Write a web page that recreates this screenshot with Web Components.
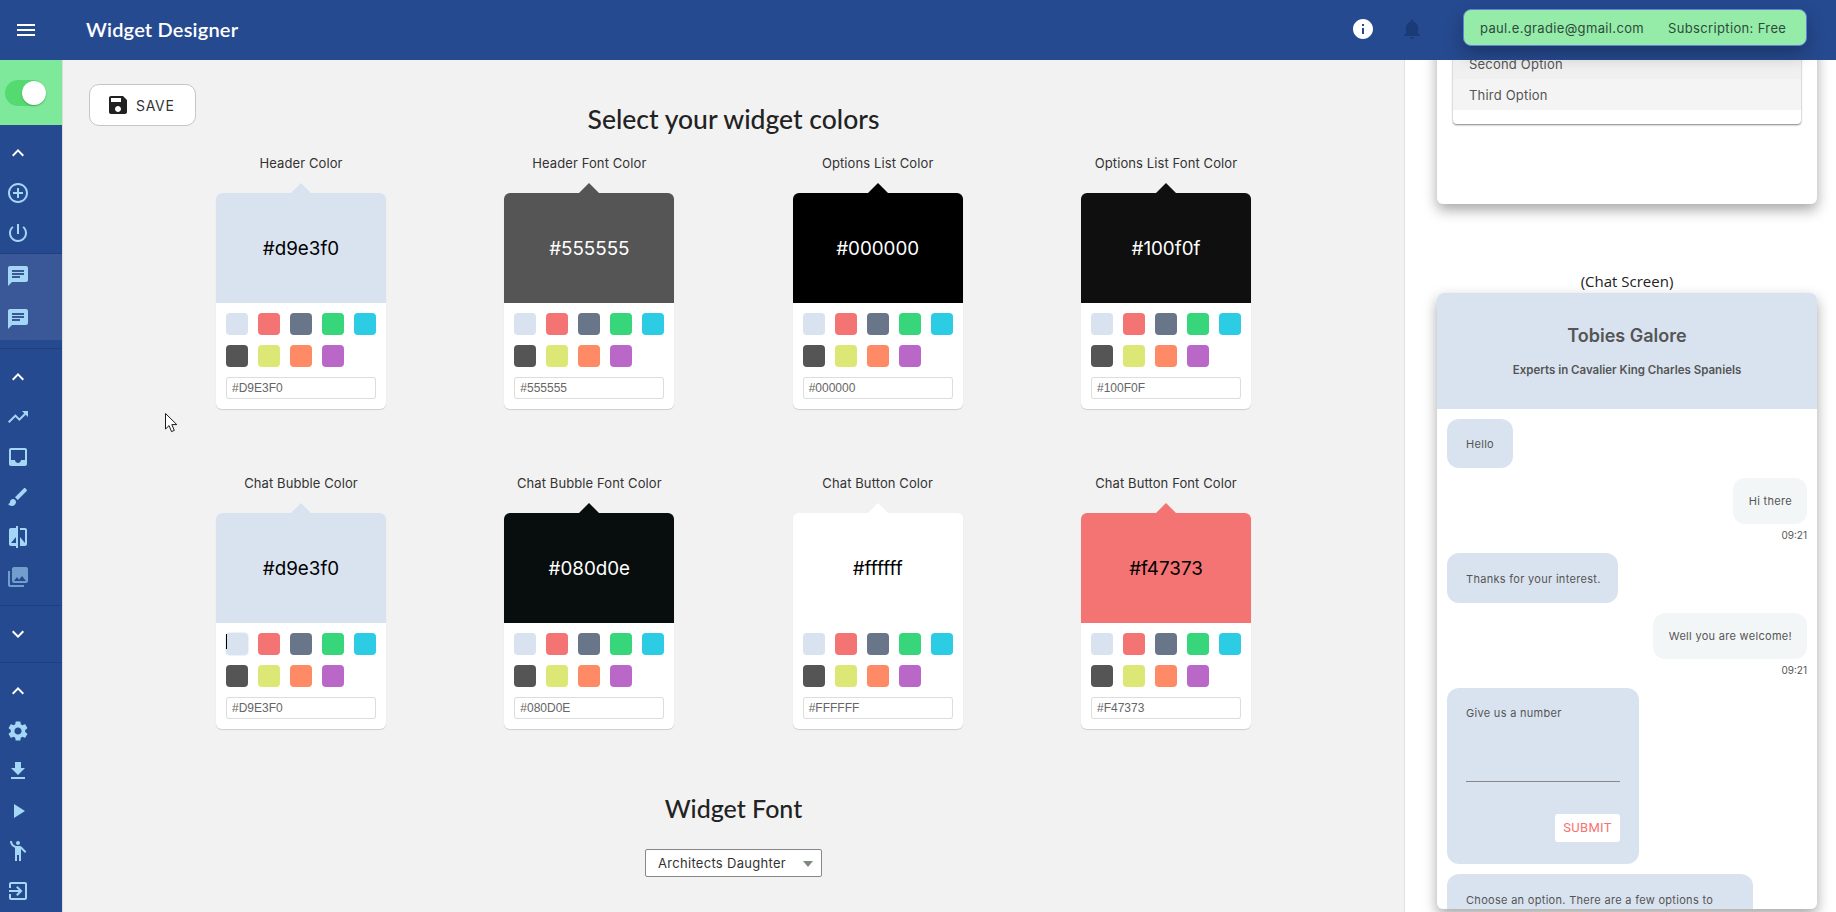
<!DOCTYPE html>
<html>
<head>
<meta charset="utf-8">
<title>Widget Designer</title>
<style>
  html, body { margin: 0; height: 100%; overflow: hidden; }
  body { font-family: Inter, "Liberation Sans", sans-serif; color: #333; }
</style>
</head>
<body>
<app-shell>
  <app-header slot="header"></app-header>
  <side-bar slot="side"></side-bar>
  <designer-main slot="main"></designer-main>
  <preview-panel slot="preview"></preview-panel>
</app-shell>
<screen-cursor></screen-cursor>

<script>
const ICONS = {
  menu: 'M3 18h18v-2H3v2zm0-5h18v-2H3v2zm0-7v2h18V6H3z',
  up: 'M12 8l-6 6 1.41 1.41L12 10.83l4.59 4.58L18 14z',
  down: 'M16.59 8.59L12 13.17 7.41 8.59 6 10l6 6 6-6z',
  add: 'M13 7h-2v4H7v2h4v4h2v-4h4v-2h-4V7zm-1-5C6.48 2 2 6.48 2 12s4.48 10 10 10 10-4.48 10-10S17.52 2 12 2zm0 18c-4.41 0-8-3.59-8-8s3.59-8 8-8 8 3.59 8 8-3.59 8-8 8z',
  power: 'M13 3h-2v10h2V3zm4.83 2.17l-1.42 1.42C17.99 7.86 19 9.81 19 12c0 3.87-3.13 7-7 7s-7-3.13-7-7c0-2.19 1.01-4.14 2.58-5.42L6.17 5.17C4.23 6.82 3 9.26 3 12c0 4.97 4.03 9 9 9s9-4.03 9-9c0-2.74-1.23-5.18-3.17-6.83z',
  chat: 'M20 2H4c-1.1 0-1.99.9-1.99 2L2 22l4-4h14c1.1 0 2-.9 2-2V4c0-1.1-.9-2-2-2zM6 9h12v2H6V9zm8 5H6v-2h8v2zm4-6H6V6h12v2z',
  trend: 'M16 6l2.29 2.29-4.88 4.88-4-4L2 16.59 3.41 18l6-6 4 4 6.3-6.29L22 12V6z',
  inbox: 'M19 3H4.99c-1.11 0-1.98.89-1.98 2L3 19c0 1.1.88 2 1.99 2H19c1.1 0 2-.9 2-2V5c0-1.11-.9-2-2-2zm0 12h-4c0 1.66-1.35 3-3 3s-3-1.34-3-3H4.99V5H19v10z',
  brush: 'M7 14c-1.66 0-3 1.34-3 3 0 1.31-1.16 2-2 2 .92 1.22 2.49 2 4 2 2.21 0 4-1.79 4-4 0-1.66-1.34-3-3-3zm13.71-9.37l-1.34-1.34c-.39-.39-1.02-.39-1.41 0L9 12.25 11.75 15l8.96-8.96c.39-.39.39-1.02 0-1.41z',
  compare: 'M10 3H5c-1.1 0-2 .9-2 2v14c0 1.1.9 2 2 2h5v2h2V1h-2v2zm0 15H5l5-6v6zm9-15h-5v2h5v13l-5-6v9h5c1.1 0 2-.9 2-2V5c0-1.1-.9-2-2-2z',
  photos: 'M22 16V4c0-1.1-.9-2-2-2H8c-1.1 0-2 .9-2 2v12c0 1.1.9 2 2 2h12c1.1 0 2-.9 2-2zm-11-4l2.03 2.71L16 11l4 5H8l3-4zM2 6v14c0 1.1.9 2 2 2h14v-2H4V6H2z',
  settings: 'M19.14 12.94c.04-.3.06-.61.06-.94 0-.32-.02-.64-.07-.94l2.03-1.58c.18-.14.23-.41.12-.61l-1.92-3.32c-.12-.22-.37-.29-.59-.22l-2.39.96c-.5-.38-1.03-.7-1.62-.94l-.36-2.54c-.04-.24-.24-.41-.48-.41h-3.84c-.24 0-.43.17-.47.41l-.36 2.54c-.59.24-1.13.57-1.62.94l-2.39-.96c-.22-.08-.47 0-.59.22L2.74 8.87c-.12.21-.08.47.12.61l2.03 1.58c-.05.3-.09.63-.09.94s.02.64.07.94l-2.03 1.58c-.18.14-.23.41-.12.61l1.92 3.32c.12.22.37.29.59.22l2.39-.96c.5.38 1.03.7 1.62.94l.36 2.54c.05.24.24.41.48.41h3.84c.24 0 .44-.17.47-.41l.36-2.54c.59-.24 1.13-.56 1.62-.94l2.39.96c.22.08.47 0 .59-.22l1.92-3.32c.12-.22.07-.47-.12-.61l-2.01-1.58zM12 15.6c-1.98 0-3.6-1.62-3.6-3.6s1.62-3.6 3.6-3.6 3.6 1.62 3.6 3.6-1.62 3.6-3.6 3.6z',
  download: 'M19 9h-4V3H9v6H5l7 7 7-7zM5 18v2h14v-2H5z',
  play: 'M8 5v14l11-7z',
  person: 'M10 4a2 2 0 1 0 4 0a2 2 0 1 0-4 0zM15.89 8.11C15.5 7.72 14.83 7 13.53 7h-2.54C8.24 6.99 6 4.75 6 2H4c0 3.16 2.11 5.84 5 6.71V22h2v-6h2v6h2V10.05L18.95 14l1.41-1.41-4.47-4.48z',
  exit: 'M10.09 15.59L11.5 17l5-5-5-5-1.41 1.41L12.67 11H3v2h9.67l-2.58 2.59zM19 3H5c-1.11 0-2 .9-2 2v4h2V5h14v14H5v-4H3v4c0 1.1.89 2 2 2h14c1.1 0 2-.9 2-2V5c0-1.1-.9-2-2-2z',
  info: 'M12 2C6.48 2 2 6.48 2 12s4.48 10 10 10 10-4.48 10-10S17.52 2 12 2zm1 15h-2v-6h2v6zm0-8h-2V7h2v2z',
  bell: 'M12 22c1.1 0 2-.9 2-2h-4c0 1.1.89 2 2 2zm6-6v-5c0-3.07-1.64-5.64-4.5-6.32V4c0-.83-.67-1.5-1.5-1.5s-1.5.67-1.5 1.5v.68C7.63 5.36 6 7.92 6 11v5l-2 2v1h16v-1l-2-2z',
  save: 'M17 3H5c-1.11 0-2 .9-2 2v14c0 1.1.89 2 2 2h14c1.1 0 2-.9 2-2V7l-4-4zm-5 16c-1.66 0-3-1.34-3-3s1.34-3 3-3 3 1.34 3 3-1.34 3-3 3zm3-10H5V5h10v4z'
};

class MdIcon extends HTMLElement {
  connectedCallback() {
    const name = this.getAttribute('name');
    this.attachShadow({ mode: 'open' }).innerHTML = `
      <style>
        :host { display: block; width: 24px; height: 24px; color: inherit; }
        svg { display: block; width: 24px; height: 24px; fill: currentColor; }
      </style>
      <svg viewBox="0 0 24 24"><path d="${ICONS[name]}"/></svg>`;
  }
}
customElements.define('md-icon', MdIcon);

class AppShell extends HTMLElement {
  constructor() {
    super();
    this.attachShadow({ mode: 'open' }).innerHTML = `
      <style>
        :host { display: flex; flex-direction: column; height: 912px; overflow: hidden; }
        .body { flex: 1; display: flex; min-height: 0; }
        ::slotted([slot=header]) { position: relative; z-index: 2; }
      </style>
      <slot name="header"></slot>
      <div class="body">
        <slot name="side"></slot>
        <slot name="main"></slot>
        <slot name="preview"></slot>
      </div>`;
  }
}
customElements.define('app-shell', AppShell);

class AppHeader extends HTMLElement {
  constructor() {
    super();
    this.attachShadow({ mode: 'open' }).innerHTML = `
      <style>
        :host { display: flex; align-items: center; height: 60px; background: #264a90; color: #fff; flex: none; }
        .menu { margin-left: 14px; }
        h1 { margin: -2px 0 0 48px; font: 600 20px Lato, "Open Sans", sans-serif; letter-spacing: .2px; flex: 1; }
        .info { margin-right: 25px; margin-top: -2px; }
        .bell { color: #1a3a78; margin-right: 39px; margin-top: -2px; }
        .pill {
          display: flex; gap: 24px; align-items: center; box-sizing: border-box;
          width: 344px; height: 37px; margin: -5px 29px 0 0; padding: 0 16px;
          background: #94eca8; border: 1px solid #5f80dc; border-radius: 8px;
          color: #2f4a3c; font: 13px Inter, sans-serif; letter-spacing: .35px; white-space: nowrap;
          box-shadow: 0 8px 18px rgba(0,0,0,.28);
        }
      </style>
      <md-icon class="menu" name="menu"></md-icon>
      <h1>Widget Designer</h1>
      <md-icon class="info" name="info"></md-icon>
      <md-icon class="bell" name="bell"></md-icon>
      <div class="pill"><span>paul.e.gradie@gmail.com</span><span>Subscription: Free</span></div>`;
  }
}
customElements.define('app-header', AppHeader);

class NavIcon extends HTMLElement {
  constructor() {
    super();
    const chevron = this.hasAttribute('chevron');
    this.attachShadow({ mode: 'open' }).innerHTML = `
      <style>
        :host { display: flex; align-items: center; padding-left: 6px; height: var(--item-h, 40px);
                color: ${chevron ? '#fff' : '#a4d6f5'}; opacity: ${this.getAttribute('dim') ? .6 : 1}; }
      </style>
      <md-icon name="${this.getAttribute('name')}"></md-icon>`;
  }
}
customElements.define('nav-icon', NavIcon);

class SideBar extends HTMLElement {
  constructor() {
    super();
    this.attachShadow({ mode: 'open' }).innerHTML = `
      <style>
        :host { display: block; flex: none; box-sizing: border-box; width: 63px; background: #264a90; border-right: 1px solid #dcdcdc; overflow: hidden; }
        .toggle-box { height: 65px; background: #7fe99b; display: flex; align-items: center; padding-left: 5px; box-sizing: border-box; }
        .track { position: relative; width: 41px; height: 26px; border-radius: 13px; background: #55da72; }
        .knob { position: absolute; left: 17px; top: 0; width: 24px; height: 24px; margin-top: 1px; background: #fff; border-radius: 50%; box-shadow: 0 1px 2px rgba(0,0,0,.25); }
        .sec { padding: 8px 0; border-bottom: 1px solid #1f3f7e; }
        .first { padding-bottom: 0; border-bottom: 0; }
        .active { background: #3a5898; border-top: 1px solid #1f3f7e; --item-h: 43px; }
        .gap { height: 8px; border-bottom: 1px solid #1f3f7e; }
      </style>
      <div class="toggle-box"><div class="track"><div class="knob"></div></div></div>
      <div class="sec first">
        <nav-icon name="up" chevron></nav-icon>
        <nav-icon name="add"></nav-icon>
        <nav-icon name="power"></nav-icon>
      </div>
      <div class="active">
        <nav-icon name="chat"></nav-icon>
        <nav-icon name="chat"></nav-icon>
      </div>
      <div class="gap"></div>
      <div class="sec">
        <nav-icon name="up" chevron></nav-icon>
        <nav-icon name="trend"></nav-icon>
        <nav-icon name="inbox"></nav-icon>
        <nav-icon name="brush"></nav-icon>
        <nav-icon name="compare"></nav-icon>
        <nav-icon name="photos" dim="1"></nav-icon>
      </div>
      <div class="sec"><nav-icon name="down" chevron></nav-icon></div>
      <div class="sec" style="border:0">
        <nav-icon name="up" chevron></nav-icon>
        <nav-icon name="settings"></nav-icon>
        <nav-icon name="download"></nav-icon>
        <nav-icon name="play"></nav-icon>
        <nav-icon name="person"></nav-icon>
        <nav-icon name="exit"></nav-icon>
      </div>`;
  }
}
customElements.define('side-bar', SideBar);

const SWATCHES = ['#D9E3F0','#F47373','#697689','#37D67A','#2CCCE4','#555555','#dce775','#ff8a65','#ba68c8'];

class ColorPicker extends HTMLElement {
  connectedCallback() {
    const color = this.getAttribute('color');
    const dark = this.hasAttribute('dark');
    const swatches = SWATCHES.map((c, i) => {
      const focus = i === 0 && this.hasAttribute('focused');
      return `<i style="background:${c}" class="${focus ? 'focus' : ''}">${focus ? '<b></b>' : ''}</i>`;
    }).join('');
    this.attachShadow({ mode: 'open' }).innerHTML = `
      <style>
        :host { display: block; width: 170px; }
        .label { text-align: center; font-size: 13px; line-height: 20px; letter-spacing: .1px; color: #333; white-space: nowrap; margin-bottom: 20px; }
        .card { position: relative; background: #fff; border-radius: 6px; box-shadow: 0 1px 1px rgba(0,0,0,.15); }
        .card::before { content: ''; position: absolute; left: 75px; top: -10px; border: 10px solid transparent; border-top: 0; border-bottom-color: ${color}; }
        .head { height: 110px; border-radius: 6px 6px 0 0; background: ${color}; color: ${dark ? '#fff' : '#000'};
                display: flex; align-items: center; justify-content: center; font-size: 18.8px; }
        .body { padding: 10px; }
        .grid { display: grid; grid-template-columns: repeat(5, 22px); gap: 10px; }
        i { position: relative; display: block; width: 22px; height: 22px; border-radius: 4px; }
        i.focus { box-shadow: 0 0 0 1px #eef3fa; }
        b { position: absolute; left: 0; top: 1px; width: 1px; height: 15px; background: #000; }
        .hex { box-sizing: border-box; height: 22px; margin-top: 10px; padding-left: 6px; border-radius: 3px;
               box-shadow: inset 0 0 0 1px #ddd; font: 12px/22px "Liberation Sans", sans-serif; color: #666; }
      </style>
      <div class="label">${this.getAttribute('label')}</div>
      <div class="card">
        <div class="head">${color}</div>
        <div class="body">
          <div class="grid">${swatches}</div>
          <div class="hex">${color.toUpperCase()}</div>
        </div>
      </div>`;
  }
}
customElements.define('color-picker', ColorPicker);

class DesignerMain extends HTMLElement {
  constructor() {
    super();
    this.attachShadow({ mode: 'open' }).innerHTML = `
      <style>
        :host { display: block; flex: 1; min-width: 0; background: #f2f2f2; box-sizing: border-box; padding: 24px 0 0; color: #222; overflow: hidden; }
        .top { display: grid; grid-template-columns: 1fr auto 1fr; height: 69px; }
        .save { box-sizing: border-box; justify-self: start; margin-left: 26px; width: 107px; height: 42px; display: flex; align-items: center; gap: 6px; padding-left: 16px;
                background: #fff; border: 1px solid #c6c6c6; border-radius: 10px; font-size: 14px; letter-spacing: .7px; color: #333; }
        .save md-icon { color: #212121; }
        h2 { margin: 0; padding-top: 19px; font: 500 26.5px/32px Lato, "Open Sans", sans-serif; color: #222; }
        .pickers { display: grid; grid-template-columns: repeat(4, 170px); justify-content: space-between; row-gap: 64px; width: 1035px; margin: 0 auto; }
        h3 { margin: 63px 0 0; text-align: center; font: 500 25px/32px Lato, "Open Sans", sans-serif; color: #222; }
        .font { box-sizing: border-box; width: 177px; height: 28px; margin: 25px auto 0; padding-left: 12px; display: flex; align-items: center;
                background: #fff; border: 1px solid #888; border-radius: 2px; font-size: 13px; letter-spacing: .3px; color: #333; position: relative; }
        .font::after { content: ''; position: absolute; right: 8px; top: 11px; border: 5px solid transparent; border-bottom: 0; border-top: 6px solid #7d8a7d; }
      </style>
      <div class="top">
        <div class="save"><md-icon name="save"></md-icon><span>SAVE</span></div>
        <h2>Select your widget colors</h2>
        <div></div>
      </div>
      <div class="pickers">
        <color-picker label="Header Color" color="#d9e3f0"></color-picker>
        <color-picker label="Header Font Color" color="#555555" dark></color-picker>
        <color-picker label="Options List Color" color="#000000" dark></color-picker>
        <color-picker label="Options List Font Color" color="#100f0f" dark></color-picker>
        <color-picker label="Chat Bubble Color" color="#d9e3f0" focused></color-picker>
        <color-picker label="Chat Bubble Font Color" color="#080d0e" dark></color-picker>
        <color-picker label="Chat Button Color" color="#ffffff"></color-picker>
        <color-picker label="Chat Button Font Color" color="#f47373"></color-picker>
      </div>
      <h3>Widget Font</h3>
      <div class="font">Architects Daughter</div>`;
  }
}
customElements.define('designer-main', DesignerMain);

class ChatBubble extends HTMLElement {
  constructor() {
    super();
    const mine = this.hasAttribute('mine');
    this.attachShadow({ mode: 'open' }).innerHTML = `
      <style>
        :host { display: block; width: fit-content; box-sizing: border-box; margin-bottom: 10px;
                padding: 15px 15px 15px ${mine ? 16 : 19}px; border-radius: 12px; font-size: 11px; line-height: 16px; letter-spacing: .3px; color: #555;
                background: ${mine ? '#f3f6f7' : '#d9e3f0'}; ${mine ? 'margin-left: auto;' : ''} white-space: nowrap; }
      </style>
      <slot></slot>`;
  }
}
customElements.define('chat-bubble', ChatBubble);

class PreviewPanel extends HTMLElement {
  constructor() {
    super();
    this.attachShadow({ mode: 'open' }).innerHTML = `
      <style>
        :host { display: block; flex: none; width: 432px; box-sizing: border-box; padding-left: 32px; background: #fff; border-left: 1px solid #e2e2e2; overflow: hidden; color: #555; }
        .card { box-sizing: border-box; width: 380px; background: #fff; border-radius: 6px; box-shadow: 0 6px 14px rgba(0,0,0,.35); }
        .options { margin-top: -22px; padding: 10px 16px 80px; }
        .list { border-radius: 0 0 4px 4px; padding-bottom: 14px; box-shadow: 0 1px 2px rgba(0,0,0,.5); }
        .list div { height: 31px; padding-left: 16px; display: flex; align-items: center; font-size: 13px; letter-spacing: .2px; background: #f4f4f4; color: #555; }
        .list div:first-child { background: #f0f0f0; }
        .caption { margin-top: 66px; height: 23px; text-align: center; font: 500 15px/23px "Open Sans", sans-serif; color: #222; width: 380px; }
        .chat { height: 616px; overflow: hidden; }
        .head { height: 116px; background: #d9e3f0; text-align: center; border-radius: 6px 6px 0 0; box-sizing: border-box; padding-top: 32px; color: #555; }
        .head strong { display: block; font-size: 18px; font-weight: 600; line-height: 22px; }
        .head span { display: block; font-size: 11.5px; font-weight: 600; line-height: 16px; margin-top: 15px; }
        .msgs { padding: 10px; }
        .time { text-align: right; font-size: 10px; line-height: 12px; margin: -5px 0 12px; color: #555; }
        .form { width: 192px; height: 176px; padding: 17px 19px 16px; white-space: normal; display: block; }
        .line { border-bottom: 1px solid #888; width: 154px; margin-top: 60px; height: 0; }
        .submit { margin: 32px 0 0 auto; width: 65px; height: 28px; background: #fff; border-radius: 3px; color: #f47373;
                  font: 400 13px/28px Roboto, sans-serif; letter-spacing: .3px; text-align: center; }
        .hello { height: 49px; width: 66px; padding-top: 17px; }
        .wide { height: 50px; padding-top: 18px; width: 171px; }
        .choose { width: 306px; height: 60px; padding-top: 18px; margin: 0; }
      </style>
      <div class="card options">
        <div class="list">
          <div>Second Option</div>
          <div>Third Option</div>
        </div>
      </div>
      <div class="caption">(Chat Screen)</div>
      <div class="card chat">
        <div class="head">
          <strong>Tobies Galore</strong>
          <span>Experts in Cavalier King Charles Spaniels</span>
        </div>
        <div class="msgs">
          <chat-bubble class="hello">Hello</chat-bubble>
          <chat-bubble mine>Hi there</chat-bubble>
          <div class="time">09:21</div>
          <chat-bubble class="wide">Thanks for your interest.</chat-bubble>
          <chat-bubble mine>Well you are welcome!</chat-bubble>
          <div class="time">09:21</div>
          <chat-bubble class="form">
            Give us a number
            <div class="line"></div>
            <div class="submit">SUBMIT</div>
          </chat-bubble>
          <chat-bubble class="choose">Choose an option. There are a few options to</chat-bubble>
        </div>
      </div>`;
  }
}
customElements.define('preview-panel', PreviewPanel);

class ScreenCursor extends HTMLElement {
  constructor() {
    super();
    this.attachShadow({ mode: 'open' }).innerHTML = `
      <style>
        :host { position: absolute; left: 165px; top: 413px; width: 13px; height: 20px; }
        svg { display: block; }
      </style>
      <svg width="13" height="20" viewBox="0 0 13 20"><path d="M.5.5v15.5l3.6-3.4 2.4 6 2.8-1.2-2.5-5.8h5z" fill="#fff" stroke="#1c1c1c" stroke-width="1"/></svg>`;
  }
}
customElements.define('screen-cursor', ScreenCursor);
</script>
</body>
</html>
